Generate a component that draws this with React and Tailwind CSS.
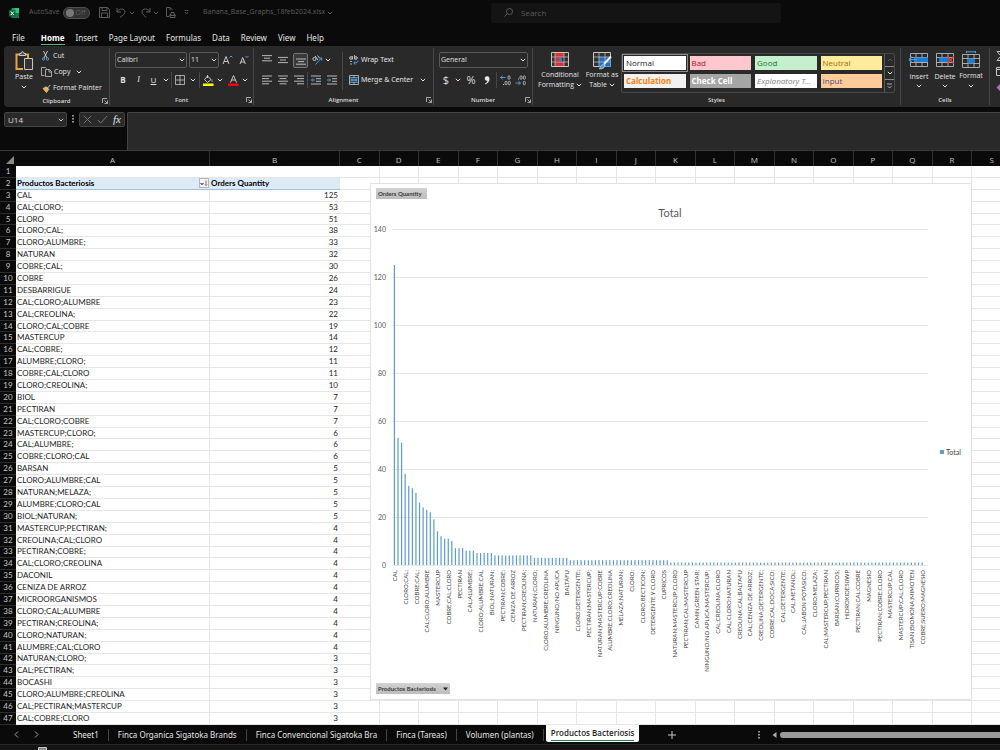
// src/App.jsx
import React, { useState } from 'react';

const rows = [
    ['CAL', 125], ['CAL;CLORO;', 53], ['CLORO', 51], ['CLORO;CAL;', 38], ['CLORO;ALUMBRE;', 33],
    ['NATURAN', 32], ['COBRE;CAL;', 30], ['COBRE', 26], ['DESBARRIGUE', 24], ['CAL;CLORO;ALUMBRE', 23],
    ['CAL;CREOLINA;', 22], ['CLORO;CAL;COBRE', 19], ['MASTERCUP', 14], ['CAL;COBRE;', 12], ['ALUMBRE;CLORO;', 11],
    ['COBRE;CAL;CLORO', 11], ['CLORO;CREOLINA;', 10], ['BIOL', 7], ['PECTIRAN', 7], ['CAL;CLORO;COBRE', 7],
    ['MASTERCUP;CLORO;', 6], ['CAL;ALUMBRE;', 6], ['COBRE;CLORO;CAL', 6], ['BARSAN', 5], ['CLORO;ALUMBRE;CAL', 5],
    ['NATURAN;MELAZA;', 5], ['ALUMBRE;CLORO;CAL', 5], ['BIOL;NATURAN;', 5], ['MASTERCUP;PECTIRAN;', 4], ['CREOLINA;CAL;CLORO', 4],
    ['PECTIRAN;COBRE;', 4], ['CAL;CLORO;CREOLINA', 4], ['DACONIL', 4], ['CENIZA DE ARROZ', 4], ['MICROORGANISMOS', 4],
    ['CLORO;CAL;ALUMBRE', 4], ['PECTIRAN;CREOLINA;', 4], ['CLORO;NATURAN;', 4], ['ALUMBRE;CAL;CLORO', 4], ['NATURAN;CLORO;', 3],
    ['CAL;PECTIRAN;', 3], ['BOCASHI', 3], ['CLORO;ALUMBRE;CREOLINA', 3], ['CAL;PECTIRAN;MASTERCUP', 3], ['CAL;COBRE;CLORO', 3]
];

const columns = 'CDEFGHIJKLMNOPQRS'.split('');

// every third category gets a label on the axis
const chartLabels = [
    'CAL', 'CLORO;CAL;', 'COBRE;CAL;', 'CAL;CLORO;ALUMBRE', 'MASTERCUP', 'COBRE;CAL;CLORO', 'PECTIRAN',
    'CAL;ALUMBRE;', 'CLORO;ALUMBRE;CAL', 'BIOL;NATURAN;', 'PECTIRAN;COBRE;', 'CENIZA DE ARROZ', 'PECTIRAN;CREOLINA;',
    'NATURAN;CLORO;', 'CLORO;ALUMBRE;CREOLINA', 'NINGUNO/NO APLICA', 'BALTAFU', 'CLORO;DETERGENTE;', 'PECTIRAN;MASTERCUP;',
    'NATURAN;MASTERCUP;COBRE', 'ALUMBRE;CLORO;CREOLINA', 'MELAZA;NATURAN;', 'CLORO;', 'CLORO;BECTICON;',
    'DETERGENTE Y CLORO', 'CUPRICOS', 'NATURAN;MASTERCUP;CLORO', 'PECTIRAN;CAL;MASTERCUP', 'CAMIN;GREEN STAR;',
    'NINGUNO/NO APLICA;MASTERCUP;', 'CAL;CREOLINA;CLORO', 'CAL;CLORO;NATURAN', 'CREOLINA;CAL;BALTAFU', 'CAL;CENIZA DE ARROZ;',
    'CREOLINA;DETERGENTE;', 'COBRE;CAL;DOCA;SICO;', 'CAL;DETERGENTE;', 'CAL;METANOL;', 'CAL;JABON POTASICO;', 'CLORO;MELAZA;',
    'CAL;MASTERCUP;PECTIRAN', 'BARSAN;CUPRICOS;', 'HIDROXIDE50WP', 'PECTIRAN;CAL;COBRE', 'MAGNESIO',
    'PECTIRAN;COBRE;CLORO', 'MASTERCUP;CAL', 'MASTERCUP;CAL;CLORO', 'TISAN;BIOMONA;MIMOTEN', 'COBRE;SUERO;MAGNESIO'
];

const chartValues = [
    ...rows.slice(0, 39).map((r) => r[1]),
    ...Array(10).fill(3),
    ...Array(28).fill(2),
    ...Array(71).fill(1)
];

const sheets = ['Sheet1', 'Finca Organica Sigatoka Brands', 'Finca Convencional Sigatoka Bra', 'Finca (Tareas)', 'Volumen (plantas)', 'Productos Bacteriosis'];

/* ---------- small pieces ---------- */

function Chevron({ className = '' }) {
    return (
        <svg viewBox="0 0 6 4" className={`w-[6px] h-[4px] shrink-0 ${className}`} fill="none" stroke="currentColor" strokeWidth="1">
            <path d="M.8.8 3 3 5.2.8" />
        </svg>
    );
}

function Icon({ w = 12, h = 12, className = '', children }) {
    return (
        <svg width={w} height={h} viewBox={`0 0 ${w} ${h}`} className={`shrink-0 ${className}`} fill="none" stroke="#c8c8c8" strokeWidth="1">
            {children}
        </svg>
    );
}

function Lines({ widths, align = 'left', top = 1 }) {
    return (
        <Icon w={10} h={10}>
            {widths.map((w, i) => {
                const x = align === 'left' ? 0 : align === 'right' ? 10 - w : (10 - w) / 2;
                return <path key={i} d={`M${x} ${top + i * 2.6}h${w}`} strokeWidth=".9" />;
            })}
        </Icon>
    );
}

function Divider() {
    return <span className="w-px h-[16px] bg-[#484848]" />;
}

function Group({ title, launcher, className = '', children }) {
    return (
        <section className={`flex flex-col shrink-0 border-r border-[#474747] my-[2px] ${className}`}>
            <div className="flex-1 flex">{children}</div>
            <div className="relative h-[10px] text-center text-[6px] leading-[10px] font-semibold text-[#dcdcdc]">
                {title}
                {launcher && (
                    <button aria-label={`${title} settings`} className="absolute right-[1px] top-[2px]">
                        <Icon w={6} h={6}>
                            <path d="M.5 5V.5H5M2.5 2.5l2.6 2.6M5.5 2.5v3h-3" strokeWidth=".8" />
                        </Icon>
                    </button>
                )}
            </div>
        </section>
    );
}

function Dropdown({ label, value, className = '' }) {
    return (
        <span className={`relative flex ${className}`}>
            <select aria-label={label} defaultValue={value} className="appearance-none w-full h-[16px] pl-[1px] text-[7px] leading-[14px] text-[#e0e0e0] bg-[#292929] border border-[#5a5a5a] rounded-[2px]">
                <option>{value}</option>
            </select>
            <Chevron className="absolute right-[2px] top-[6px] text-[#dddddd]" />
        </span>
    );
}

/* ---------- window parts ---------- */

function TitleBar() {
    return (
        <header className="flex items-center h-[25px] text-[7px] text-[#5c5c5c]">
            <Icon w={10} h={10} className="ml-[9px]">
                <g stroke="none">
                    <rect x="2.5" width="7.5" height="10" rx=".8" fill="#21a366" />
                    <rect x="6" width="4" height="5" fill="#33c481" />
                    <rect x="2.5" y="5" width="7.5" height="5" fill="#107c41" />
                    <rect y="2" width="6.5" height="6.5" rx=".6" fill="#0f6e3b" />
                </g>
                <path d="m1.8 3.5 3 3.6m0-3.6-3 3.6" stroke="#fff" />
            </Icon>
            <label className="flex items-center gap-[3px] ml-[10px] w-[63px]">
                AutoSave
                <span className="relative">
                    <input type="checkbox" className="block appearance-none w-[27px] h-[12px] rounded-full bg-[#333333] border border-[#505050] before:block before:size-[8px] before:rounded-full before:bg-[#777777] before:mt-px before:ml-[2px]" />
                    <span className="absolute right-[4px] top-0 leading-[12px]">Off</span>
                </span>
            </label>
            <button aria-label="Save" className="ml-[7px]">
                <Icon w={11} h={11} className="stroke-[#5c5c5c]">
                    <path d="M.5.5h8l2 2v8H.5zM3 .5v3h5v-3M2.5 10.5V6h6v4.5" />
                </Icon>
            </button>
            <button aria-label="Undo" className="ml-[6px] flex items-center gap-[2px]">
                <Icon w={11} h={11} className="stroke-[#5c5c5c]">
                    <path d="M1 1v4h4M1 5c2-4 8-4 8 0 0 2-2 3-5 5.5" />
                </Icon>
                <Chevron />
            </button>
            <button aria-label="Redo" className="ml-[5px] flex items-center gap-[2px]">
                <Icon w={11} h={11} className="stroke-[#5c5c5c]">
                    <path d="M10 1v4H6M10 5C8 1 2 1 2 5c0 2 2 3 4 5.5" />
                </Icon>
                <Chevron />
            </button>
            <button aria-label="Print preview" className="ml-[6px]">
                <Icon w={11} h={11} className="stroke-[#5c5c5c]">
                    <path d="M4 9.5H1.5v-9H5L7.5 3M5 .5V3M5 10.5v-3h1v-2h3v2h1v3zM4.5 8.5h6" />
                </Icon>
            </button>
            <Icon w={5} h={5} className="ml-[8px] stroke-[#5c5c5c]">
                <path d="M.5.5h4M1 2l1.5 2L4 2" strokeWidth=".8" />
            </Icon>
            <span className="ml-[14px]">Banana_Base_Graphs_18feb2024.xlsx</span>
            <Chevron className="ml-[2px]" />
            <label className="flex items-center gap-[8px] h-[20px] w-[290px] ml-auto mr-[219px] px-[13px] bg-[#141414] rounded-[2px] text-[8px]">
                <Icon w={9} h={9} className="stroke-[#5c5c5c]">
                    <circle cx="5.5" cy="3.5" r="3" />
                    <path d="M3.3 5.7.5 8.5" />
                </Icon>
                <input aria-label="Search" placeholder="Search" className="w-full bg-transparent placeholder:text-[#5c5c5c]" />
            </label>
        </header>
    );
}

function Menu() {
    const items = ['File', 'Home', 'Insert', 'Page Layout', 'Formulas', 'Data', 'Review', 'View', 'Help'];
    return (
        <nav className="flex items-start gap-[11px] h-[21px] pt-[6px] pl-[12px] text-[8px] leading-[13px] text-[#e6e6e6] font-['Noto_Sans',sans-serif]">
            {items.map((item) => (
                <button key={item} className={item === 'Home' ? 'font-bold text-white border-b border-[#4fb57f] h-[14px]' : item === 'File' ? 'mr-[5px]' : ''}>{item}</button>
            ))}
        </nav>
    );
}

function Clipboard() {
    return (
        <Group title="Clipboard" launcher className="w-[106px]">
            <button className="flex flex-col items-center w-[38px] pt-[3px] text-[7px] leading-[10px] pl-[2px]">
                <Icon w={18} h={20}>
                    <path d="M8 18H1.5V3.5h3M9 3.5h4V7" stroke="#e8a33d" strokeWidth="2" />
                    <path d="M4.5 4.5v-2H6c0-2.5 3-2.5 3 0h1.5v2z" fill="#555" />
                    <path d="M9.5 7.5h8v11h-8z" fill="#333" />
                </Icon>
                <span className="mt-px">Paste</span>
                <Chevron className="mt-[3px]" />
            </button>
            <div className="flex flex-col text-[7px] leading-[16px]">
                <button className="flex items-center gap-[4px] h-[16px]">
                    <Icon w={7} h={10}>
                        <path d="M1.5 0 5 7M5.5 0 2 7" />
                        <circle cx="1.5" cy="8" r="1.2" stroke="#4a9fe0" />
                        <circle cx="5.5" cy="8" r="1.2" stroke="#4a9fe0" />
                    </Icon>
                    Cut
                </button>
                <button className="flex items-center gap-[2px] h-[16px] -ml-px">
                    <Icon w={11} h={10}>
                        <path d="M3.5 8.5h-3v-8h4l1 1M4.5 2.5h4l2 2v5h-6zM8 2.5V5h2.5" strokeWidth=".8" />
                    </Icon>
                    Copy
                    <Chevron className="ml-[4px]" />
                </button>
                <button className="flex items-center gap-[2px] h-[16px] whitespace-nowrap">
                    <Icon w={9} h={9}>
                        <path d="M1 4.5 4 3l2.5 2.5-2 3z" fill="#e8b45a" stroke="#e8b45a" />
                        <path d="m4 2.5 3 3M5.5 4l3-3.2" />
                    </Icon>
                    Format Painter
                </button>
            </div>
        </Group>
    );
}

function FontGroup() {
    return (
        <Group title="Font" launcher className="w-[144px]">
            <div className="flex flex-col gap-[4px] pt-[4px] pl-[5px]">
                <div className="flex items-center gap-[2px]">
                    <Dropdown label="Font" value="Calibri" className="w-[72px]" />
                    <Dropdown label="Font size" value="11" className="w-[30px]" />
                    <button aria-label="Increase font size" className="ml-px">
                        <Icon w={11} h={11}>
                            <path d="m1 9 3-7.5L7 9M2 6.5h4" />
                            <path d="M7.5 2.5 9 1l1.5 1.5" stroke="#4a9fe0" />
                        </Icon>
                    </button>
                    <button aria-label="Decrease font size" className="ml-[4px]">
                        <Icon w={11} h={11}>
                            <path d="m1 9 2.700-6.500L6.400 9M2 7h3.500" />
                            <path d="m6.500 1 1.500 1.500L9.500 1" stroke="#4a9fe0" />
                        </Icon>
                    </button>
                </div>
                <div className="flex items-center h-[16px] text-[8px] text-[#e0e0e0]">
                    <button className="w-[16px] font-bold">B</button>
                    <button className="w-[15px] italic font-['Liberation_Serif',serif]">I</button>
                    <button className="w-[15px] underline">U</button>
                    <Chevron className="mx-[2px]" />
                    <Divider />
                    <button aria-label="Borders" className="mx-[3px]">
                        <Icon w={10} h={10}>
                            <path d="M.5.5h9v9h-9zM5 .5v9M.5 5h9" strokeWidth=".8" />
                        </Icon>
                    </button>
                    <Chevron className="ml-[2px] mr-[3px]" />
                    <Divider />
                    <button aria-label="Fill color" className="ml-[3px] mr-[3px]">
                        <Icon w={11} h={11}>
                            <path d="M4.5 1 8 4.5l-3.5 3-3-3zM4.5 0v3" />
                            <path d="M9 4.5V7" stroke="#4a9fe0" />
                            <path d="M0 9.7h10.5" stroke="#ffff00" strokeWidth="2.4" />
                        </Icon>
                    </button>
                    <Chevron />
                    <button aria-label="Font color" className="ml-[5px] mr-[3px]">
                        <Icon w={11} h={11}>
                            <path d="m2.5 7.5 3-7 3 7M3.5 5h4" />
                            <path d="M0 9.7h10.5" stroke="#ff0000" strokeWidth="2.4" />
                        </Icon>
                    </button>
                    <Chevron />
                </div>
            </div>
        </Group>
    );
}

function Indent({ dir }) {
    return (
        <Icon w={10} h={10}>
            <path d="M0 1h10M5 3.7h5M5 6.3h5M0 9h10" strokeWidth=".9" />
            <path d={dir === 'in' ? 'M0 5h3.5M2 3.5 3.5 5 2 6.5' : 'M.5 5H4M2 3.5.5 5 2 6.5'} stroke="#4a9fe0" />
        </Icon>
    );
}

function Alignment() {
    return (
        <Group title="Alignment" launcher className="w-[180px]">
            <div className="flex flex-col gap-[4px] pt-[4px] pl-[7px]">
                <div className="flex items-center h-[16px]">
                    <button aria-label="Top align" className="w-[16px] pl-px"><Lines widths={[10, 6, 10]} align="center" top={0.6} /></button>
                    <button aria-label="Middle align" className="w-[16px] pl-px"><Lines widths={[10, 6, 10]} align="center" top={2.4} /></button>
                    <button aria-label="Bottom align" className="size-[15px] pl-[2px] bg-[#3a3a3a] border border-[#777777] rounded-[2px]"><Lines widths={[10, 6, 10]} align="center" top={4} /></button>
                    <button aria-label="Orientation" className="flex items-center gap-[2px] ml-[4px]">
                        <Icon w={11} h={10}>
                            <circle cx="2.5" cy="4" r="1.6" />
                            <path d="m3 1 3 4M5.5.5l2 2.5" />
                            <path d="m3.5 9.5 6-6.500M7 3h2.700v2.700" stroke="#4a9fe0" />
                        </Icon>
                        <Chevron />
                    </button>
                </div>
                <div className="flex items-center h-[16px]">
                    <button aria-label="Align left" className="w-[16px] pl-px"><Lines widths={[10, 7, 10, 7]} /></button>
                    <button aria-label="Center" className="w-[16px] pl-px"><Lines widths={[10, 7, 10, 7]} align="center" /></button>
                    <button aria-label="Align right" className="w-[14px] pl-px"><Lines widths={[10, 7, 10, 7]} align="right" /></button>
                    <Divider />
                    <button aria-label="Decrease indent" className="ml-[3px] w-[16px]"><Indent dir="out" /></button>
                    <button aria-label="Increase indent"><Indent dir="in" /></button>
                </div>
            </div>
            <span className="w-px h-[38px] mt-[4px] ml-[5px] bg-[#484848]" />
            <div className="flex flex-col gap-[4px] pt-[4px] pl-[6px] text-[7px] whitespace-nowrap font-['Noto_Sans',sans-serif]">
                <button className="flex items-center gap-[2px] h-[16px]">
                    <Icon w={10} h={10}>
                        <circle cx="2" cy="3" r="1.3" />
                        <path d="M3.5 1v3.5M5.5 0v4.5M1 6.5h2M1 9h2" strokeWidth=".8" />
                        <circle cx="7" cy="3" r="1.3" />
                        <path d="M9 5.5c0 2-1 2.5-4 2.5M6.5 6.3 4.7 8l1.8 1.6" stroke="#4a9fe0" />
                    </Icon>
                    Wrap Text
                </button>
                <button className="flex items-center gap-[2px] h-[16px]">
                    <Icon w={10} h={10}>
                        <path d="M.5.5h9v9h-9zM.5 2.8h9M.5 7.2h9M5 .5v2M5 7.5v2" strokeWidth=".8" />
                        <path d="M1 3.2h8v3.6H1z" fill="#1d5c94" stroke="none" />
                        <path d="M2 5h6" stroke="#6bb8f0" />
                    </Icon>
                    Merge &amp; Center
                    <Chevron className="ml-[5px]" />
                </button>
            </div>
        </Group>
    );
}

function NumberGroup() {
    return (
        <Group title="Number" launcher className="w-[99px]">
            <div className="flex flex-col gap-[4px] pt-[4px] pl-[5px]">
                <Dropdown label="Number format" value="General" className="w-[89px]" />
                <div className="flex items-center h-[16px] text-[11px] leading-[16px] text-[#dddddd]">
                    <button className="w-[14px]">$</button>
                    <Chevron className="ml-[2px] mr-[4px]" />
                    <button className="w-[12px]">%</button>
                    <button aria-label="Comma style" className="ml-[7px] mr-[6px]">
                        <Icon w={6} h={9}>
                            <path d="M3 .5a2 2 0 0 0 0 4h.5C3.5 6 2.5 7 1 8c3-.5 4.5-3 4.2-5.5A2 2 0 0 0 3 .5z" fill="#eee" stroke="#eee" strokeWidth=".5" />
                        </Icon>
                    </button>
                    <Divider />
                    <button aria-label="Increase decimal" className="ml-[3px]">
                        <Icon w={11} h={11}>
                            <path d="M.5 2.5h5M2.5.8.5 2.5l2 1.7" stroke="#4a9fe0" />
                            <rect x="8" y=".8" width="2" height="3.5" rx="1" strokeWidth=".8" />
                            <rect x="5" y="6.3" width="2" height="3.5" rx="1" strokeWidth=".8" />
                            <rect x="8.3" y="6.3" width="2" height="3.5" rx="1" strokeWidth=".8" />
                            <path d="M3 9.5h1" />
                        </Icon>
                    </button>
                    <button aria-label="Decrease decimal" className="ml-[4px]">
                        <Icon w={11} h={11}>
                            <path d="M.5 8h5M3.5 6.3l2 1.7-2 1.7" stroke="#4a9fe0" />
                            <rect x="5" y=".8" width="2" height="3.5" rx="1" strokeWidth=".8" />
                            <rect x="8.3" y=".8" width="2" height="3.5" rx="1" strokeWidth=".8" />
                            <rect x="8.3" y="6.3" width="2" height="3.5" rx="1" strokeWidth=".8" />
                            <path d="M3 4h1" />
                        </Icon>
                    </button>
                </div>
            </div>
        </Group>
    );
}

const cellStyles = [
    ['Normal', 'bg-white text-[#222222] outline outline-[#8a8a8a] outline-offset-1'],
    ['Bad', 'bg-[#ffc7ce] text-[#b01020]'],
    ['Good', 'bg-[#c6efce] text-[#0f7a1c]'],
    ['Neutral', 'bg-[#ffeb9c] text-[#a86a00]'],
    ['Calculation', 'bg-[#f2f2f2] text-[#fa7d00] font-bold'],
    ['Check Cell', 'bg-[#a5a5a5] text-white font-bold border-[#777777]'],
    ['Explanatory T...', 'bg-white text-[#7f7f7f] italic'],
    ['Input', 'bg-[#ffcc99] text-[#4f4f86]']
];

function Styles() {
    return (
        <Group title="Styles" className="flex-1 min-w-[368px]">
            <button className="flex flex-col items-center w-[48px] ml-[3px] pt-[4px] text-[7px] leading-[10px]">
                <Icon w={18} h={16}>
                    <path d="M.5.5h17v14H.5z" fill="#333" />
                    <path d="M4 1h9v4H4zM4 10h9v4H4z" fill="#e23030" stroke="none" />
                    <path d="M4 5.5h4v4H4z" fill="#e23030" stroke="none" />
                    <path d="M8 5.500h3v4H8z" fill="#2f7fd0" stroke="none" />
                    <path d="M.5 5h17M.5 10h17M4 .5v14M13 .5v14" strokeWidth=".7" />
                </Icon>
                <span className="mt-[2px]">Conditional</span>
                <span className="flex items-center gap-[2px]">Formatting <Chevron /></span>
            </button>
            <button className="flex flex-col items-center w-[36px] pt-[4px] text-[7px] leading-[10px] whitespace-nowrap">
                <Icon w={19} h={18} className="-mb-[2px]">
                    <path d="M.5.5h17v14H.5z" fill="#333" />
                    <path d="M6 5h11.5v9.5H6z" fill="#1b6ec2" stroke="none" />
                    <path d="M.5 5h17M.5 10h17M6 .5v14M12 .5v14" strokeWidth=".7" />
                    <path d="m18 4.5-7 7.5" stroke="#eee" strokeWidth="2" />
                    <path d="M6.5 17c1-4 3-5 5-4 .5 3-2 4-5 4z" fill="#4a9fe0" stroke="#ddd" strokeWidth=".7" />
                </Icon>
                <span className="mt-[2px]">Format as</span>
                <span className="flex items-center gap-[2px]">Table <Chevron /></span>
            </button>
            <div className="flex flex-1 h-[40px] mt-[5px] ml-px mr-[5px] border border-[#484848] rounded-[2px]">
                <div className="flex-1 grid grid-cols-4 content-start gap-[4px] p-[2px]">
                    {cellStyles.map(([name, look]) => (
                        <button key={name} className={`h-[14px] pl-[1px] text-left text-[8px] leading-[12px] whitespace-nowrap border border-transparent ${look}`}>{name}</button>
                    ))}
                </div>
                <div className="flex flex-col w-[10px] border-l border-[#5a5a5a] divide-y divide-[#8a8a8a]">
                    <button aria-label="Previous styles" className="flex-1 flex items-center justify-center text-[#555555]"><Chevron className="rotate-180" /></button>
                    <button aria-label="Next styles" className="flex-1 flex items-center justify-center"><Chevron /></button>
                    <button aria-label="More styles" className="flex-1 flex items-center justify-center">
                        <Icon w={5} h={6}><path d="M0 1h5M.5 3l2 2 2-2" strokeWidth=".8" /></Icon>
                    </button>
                </div>
            </div>
        </Group>
    );
}

function CellGrid({ children, top = 2 }) {
    return (
        <Icon w={20} h={18}>
            <path d={`M1.5 ${top + 0.5}h17v13h-17zM1.5 ${top + 4.5}h17M1.5 ${top + 9.5}h17M7 ${top + 0.5}v13M13 ${top + 0.5}v13`} strokeWidth=".8" />
            {children}
        </Icon>
    );
}

function Cells() {
    const button = 'flex flex-col items-center w-[26px] text-[7px] leading-[10px]';
    return (
        <Group title="Cells" className="w-[89px]">
            <div className="flex pl-[5px] pt-[3px]">
                <button className={button}>
                    <CellGrid>
                        <path d="M5 6.5h14V11H5z" fill="#1b7fd8" stroke="none" />
                        <path d="M0 8.7h8m-5-3-3 3 3 3" stroke="#4a9fe0" strokeWidth="1.3" />
                    </CellGrid>
                    <span className="mt-[3px]">Insert</span>
                    <Chevron className="mt-[2px]" />
                </button>
                <button className={button}>
                    <CellGrid>
                        <path d="M4 6.5h9V11H4z" fill="#1b7fd8" stroke="none" />
                        <path d="m12 5 7 8m0-8-7 8" stroke="#e04040" strokeWidth="1.2" />
                    </CellGrid>
                    <span className="mt-[3px]">Delete</span>
                    <Chevron className="mt-[2px]" />
                </button>
                <button className={button}>
                    <CellGrid top={3}>
                        <path d="M7 7.5h6v5H7z" fill="#1b7fd8" stroke="none" />
                        <path d="M5.5.8h9M5.5-.5V2M14.5-.5V2" stroke="#4a9fe0" />
                    </CellGrid>
                    <span className="mt-[2px]">Format</span>
                    <Chevron className="mt-[3px]" />
                </button>
            </div>
        </Group>
    );
}

function Ribbon() {
    return (
        <div className="flex h-[61px] ml-[4px] overflow-hidden bg-[#292929] rounded-l-[4px] text-[#e4e4e4]">
            <Clipboard />
            <FontGroup />
            <Alignment />
            <NumberGroup />
            <Styles />
            <Cells />
            <div className="flex flex-col gap-[6px] w-[10px] shrink-0 pt-[5px] pl-[6px] overflow-hidden">
                <Icon w={9} h={10}><path d="M8 .5H1L5 5 1 9.5h7" /></Icon>
                <Icon w={9} h={10}><path d="M.5.5h8v8h-8zM.5 2.5h8" /></Icon>
                <Icon w={9} h={10}><path d="m4.5.5 4 4-4 4-4-4z" fill="#c060d0" stroke="none" /></Icon>
            </div>
        </div>
    );
}

function FormulaBar() {
    return (
        <div className="flex items-start h-[43px] pt-[5px] pl-[4px]">
            <label className="relative">
                <input aria-label="Name box" defaultValue="U14" className="block w-[63px] h-[15px] pl-[3px] text-[8px] bg-[#292929] border border-[#444444] rounded-[2px] text-[#dedede]" />
                <Chevron className="absolute right-[3px] top-[6px] text-[#cccccc]" />
            </label>
            <Icon w={2} h={9} className="ml-[5px] mt-[3px]"><path d="M1 0v9" strokeDasharray="1.5 1.5" strokeWidth="1.5" /></Icon>
            <div className="flex items-center justify-between w-[46px] h-[15px] ml-[5px] px-[3px] bg-[#292929] border border-[#444444] rounded-[2px]">
                <button aria-label="Cancel"><Icon w={9} h={9} className="stroke-[#777777]"><path d="m.8.8 7.4 7.4m0-7.4L.8 8.2" /></Icon></button>
                <button aria-label="Enter"><Icon w={11} h={9} className="stroke-[#777777]"><path d="m.8 5 3 3L10 1" /></Icon></button>
                <button className="italic text-[11px] leading-[13px] font-['Liberation_Serif',serif] text-[#e6e6e6]">fx</button>
            </div>
            <textarea aria-label="Formula" className="flex-1 h-[39px] ml-[2px] resize-none bg-[#292929] border border-r-0 border-[#444444] rounded-l-[2px]" />
        </div>
    );
}

function PivotChart() {
    const left = 22;
    const right = 558;
    const bottom = 382;
    const unit = 2.4;
    const step = 3.59;

    return (
        <svg width="602" height="517" className="absolute left-[370px] top-[32px] font-['Lato',sans-serif]" role="img" aria-label="Total">
            <defs>
                <linearGradient id="fieldButton" x2="0" y2="1">
                    <stop stopColor="#d2d2d2" />
                    <stop offset="1" stopColor="#bcbcbc" />
                </linearGradient>
            </defs>
            <rect x=".5" y=".5" width="601" height="516" fill="#fff" stroke="#e2e2e2" />

            <rect x="6" y="5" width="51" height="11" fill="url(#fieldButton)" />
            <text x="8" y="13" fontSize="6" fontWeight="bold" fill="#3a3a3a">Orders Quantity</text>

            <text x="300" y="34" fontSize="11" textAnchor="middle" fill="#595959">Total</text>

            {[0, 20, 40, 60, 80, 100, 120, 140].map((tick) => (
                <g key={tick}>
                    <path d={`M${left} ${Math.round(bottom - tick * unit) + 0.5}H${right}`} stroke="#e6e6e6" />
                    <text x="16" y={Math.round(bottom - tick * unit) + 3} fontSize="7" textAnchor="end" fill="#595959">{tick}</text>
                </g>
            ))}

            {chartValues.map((value, i) => (
                <rect key={i} x={left + 1.8 + i * step} y={bottom - value * unit} width="1.2" height={value * unit} fill="#5b9bd5" />
            ))}

            {chartLabels.map((label, i) => (
                <text key={i} transform={`translate(${left + 5 + i * step * 3} 387) rotate(-90)`} fontSize="6" textAnchor="end" fill="#404040">{label}</text>
            ))}

            <rect x="570" y="267" width="4" height="4" fill="#5b9bd5" />
            <text x="576" y="272" fontSize="7" fill="#404040">Total</text>

            <rect x="6" y="500" width="74" height="11" fill="url(#fieldButton)" />
            <text x="8" y="508" fontSize="6" fontWeight="bold" fill="#3a3a3a">Productos Bacteriosis</text>
            <path d="M73 504.5h5l-2.5 3z" fill="#222" />
        </svg>
    );
}

function Sheet() {
    const rowHead = 'p-0 text-center text-[8px] leading-[9px] font-normal bg-[#0a0a0a] text-[#c4c4c4] border-b border-[#2c2c2c]';
    const line = 'border-b border-[#e6e6e6]';

    return (
        <main className="relative flex-1 min-h-0 overflow-hidden bg-white border-t border-[#3a3a3a]">
            <table className="table-fixed border-separate border-spacing-0 w-[1012px] h-full font-['Lato',sans-serif] text-[8px] leading-[9px] text-[#1e1e1e]">
                <colgroup>
                    <col className="w-[16px]" />
                    <col className="w-[194px]" />
                    <col className="w-[130px]" />
                    {columns.map((c) => <col key={c} />)}
                </colgroup>
                <thead>
                    <tr className="h-[15px] bg-[#0a0a0a] text-[#c4c4c4] font-['Open_Sans',sans-serif]">
                        <th className="p-0">
                            <Icon w={8} h={8} className="ml-[6px] mt-[2px]"><path d="M8 0v8H0z" fill="#8a8a8a" stroke="none" /></Icon>
                        </th>
                        {['A', 'B', ...columns].map((c) => (
                            <th key={c} className="p-0 pt-[2px] font-normal border-r border-[#333333]">{c}</th>
                        ))}
                    </tr>
                </thead>
                <tbody>
                    <tr>
                        <th className={rowHead}>1</th>
                        <td className={`p-0 ${line}`} />
                        <td className={`p-0 ${line}`} />
                        {columns.map((c) => <td key={c} className={`p-0 border-r ${line}`} />)}
                    </tr>
                    <tr className="font-bold text-black">
                        <th className={rowHead}>2</th>
                        <td className="p-0 px-px bg-[#ddebf7] border-b border-[#9bc2e6]">
                            <div className="flex items-center justify-between">
                                Productos Bacteriosis
                                <button aria-label="Sort" className="flex items-center justify-center size-[10px] -my-px bg-[#f4f4f4] border border-[#b5b5b5]">
                                    <Icon w={8} h={6} className="stroke-[#555555]"><path d="M.5 3.5h3L2 5zM6 .5v5m-1-1 1 1 1-1" strokeWidth=".8" /></Icon>
                                </button>
                            </div>
                        </td>
                        <td className="p-0 pl-px bg-[#ddebf7] border-b border-[#9bc2e6]">Orders Quantity</td>
                        {columns.map((c) => <td key={c} className={`p-0 border-r ${line}`} />)}
                    </tr>
                    {rows.map(([name, qty], i) => (
                        <tr key={i}>
                            <th className={rowHead}>{i + 3}</th>
                            <td className={`p-0 pl-px border-r ${line}`}>{name}</td>
                            <td className={`p-0 pr-[2px] text-right ${line}`}>{qty}</td>
                            {columns.map((c) => <td key={c} className={`p-0 border-r ${line}`} />)}
                        </tr>
                    ))}
                </tbody>
            </table>
            <PivotChart />
        </main>
    );
}

function SheetTabs() {
    const [active, setActive] = useState('Productos Bacteriosis');

    return (
        <footer className="text-[8px] text-[#e4e4e4]">
            <div className="flex items-center h-[19px]">
                <button aria-label="Previous sheet" className="ml-[14px]"><Icon w={5} h={7}><path d="M4 .5 1 3.5l3 3" strokeWidth=".8" /></Icon></button>
                <button aria-label="Next sheet" className="ml-[15px] mr-[25px]"><Icon w={5} h={7}><path d="m1 .5 3 3-3 3" strokeWidth=".8" /></Icon></button>
                <div className="flex items-center h-full">
                    {sheets.map((s) => (
                        <button
                            key={s}
                            onClick={() => setActive(s)}
                            className={s === active
                                ? 'self-start h-[17px] ml-[2px] px-[5px] bg-white text-[#1e1e1e] font-semibold rounded-b-[2px] whitespace-nowrap'
                                : "h-[12px] px-[9px] border-r border-[#444444] leading-[12px] whitespace-nowrap font-['Noto_Sans',sans-serif]"}
                        >
                            <span className={s === active ? 'block leading-[14px] border-b border-[#1e8a50]' : ''}>{s}</span>
                        </button>
                    ))}
                </div>
                <button aria-label="New sheet" className="ml-[29px]"><Icon w={8} h={8}><path d="M4 0v8M0 4h8" /></Icon></button>
                <div className="flex items-center flex-1 max-w-[242px] ml-auto">
                    <Icon w={2} h={8}><path d="M1 0v8" strokeDasharray="1.5 1.5" strokeWidth="1.5" /></Icon>
                    <Icon w={5} h={6} className="ml-[12px]"><path d="M4.5 0v6l-4-3z" fill="#aaa" stroke="none" /></Icon>
                    <span className="flex-1 h-[6px] ml-[3px] bg-[#9a9a9a] rounded-l-full" />
                </div>
            </div>
            <div className="flex items-start gap-[9px] h-[6px] pt-[2px] pl-[6px] overflow-hidden bg-[#141414] border-t border-[#2a2a2a] leading-[9px]">
                Ready
                <Icon w={9} h={8}><path d="M.5.5h8v7h-8zM.5 3h8" fill="#777" /></Icon>
            </div>
        </footer>
    );
}

function App() {
    return (
        <div className="flex flex-col h-screen overflow-hidden bg-[#0a0a0a] font-['Open_Sans','Noto_Sans',sans-serif]">
            <TitleBar />
            <Menu />
            <Ribbon />
            <FormulaBar />
            <Sheet />
            <SheetTabs />
        </div>
    );
}

export default App;
